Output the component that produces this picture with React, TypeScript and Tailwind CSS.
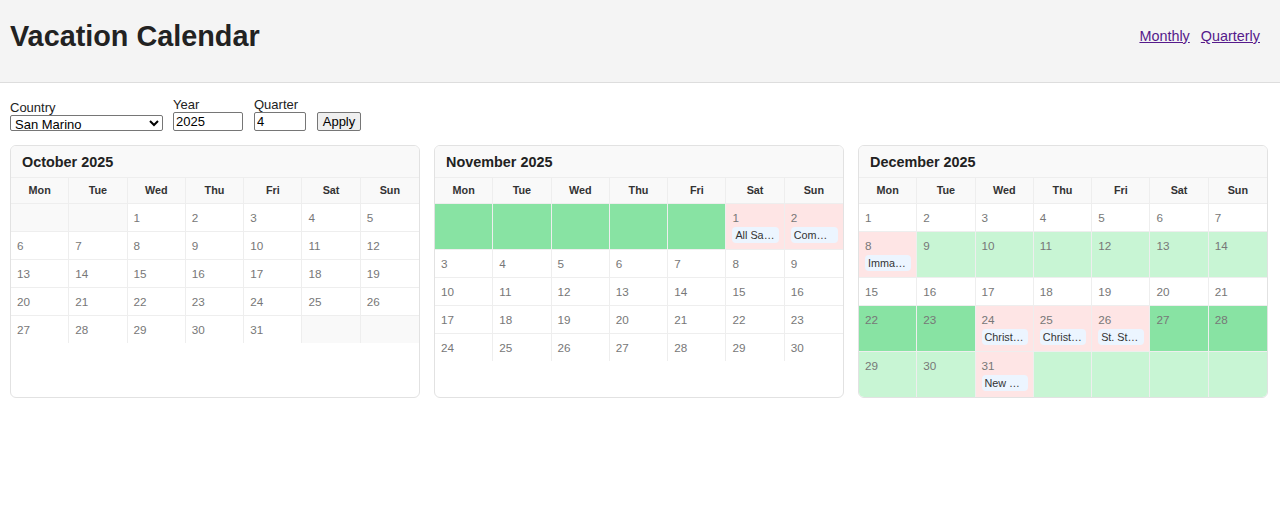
import React from "react";

type Kind = "empty" | "plain" | "holiday" | "bridge" | "vacation";

interface Cell {
    day?: number;
    kind: Kind;
    holiday?: string;
}

interface MonthData {
    title: string;
    weeks: Cell[][];
}

const DAYS = ["Mon", "Tue", "Wed", "Thu", "Fri", "Sat", "Sun"];

const e = (kind: Kind = "empty"): Cell => ({ kind });
const d = (day: number, kind: Kind = "plain", holiday?: string): Cell => ({
    day,
    kind,
    holiday,
});
const run = (from: number, to: number, kind: Kind = "plain"): Cell[] => {
    const out: Cell[] = [];
    for (let i = from; i <= to; i++) out.push(d(i, kind));
    return out;
};

const months: MonthData[] = [
    {
        title: "October 2025",
        weeks: [
            [e(), e(), ...run(1, 5)],
            run(6, 12),
            run(13, 19),
            run(20, 26),
            [...run(27, 31), e(), e()],
        ],
    },
    {
        title: "November 2025",
        weeks: [
            [
                e("bridge"),
                e("bridge"),
                e("bridge"),
                e("bridge"),
                e("bridge"),
                d(1, "holiday", "All Saints' Day"),
                d(2, "holiday", "Commemoration of the Dead"),
            ],
            run(3, 9),
            run(10, 16),
            run(17, 23),
            run(24, 30),
        ],
    },
    {
        title: "December 2025",
        weeks: [
            run(1, 7),
            [d(8, "holiday", "Immaculate Conception"), ...run(9, 14, "vacation")],
            run(15, 21),
            [
                d(22, "bridge"),
                d(23, "bridge"),
                d(24, "holiday", "Christmas Eve"),
                d(25, "holiday", "Christmas Day"),
                d(26, "holiday", "St. Stephen's Day"),
                d(27, "bridge"),
                d(28, "bridge"),
            ],
            [
                d(29, "vacation"),
                d(30, "vacation"),
                d(31, "holiday", "New Year's Eve"),
                e("vacation"),
                e("vacation"),
                e("vacation"),
                e("vacation"),
            ],
        ],
    },
];

const cellBg: Record<Kind, string> = {
    empty: "bg-[#f9f9f9]",
    plain: "bg-white",
    holiday: "bg-[#fee5e5]",
    bridge: "bg-[#88e3a3]",
    vacation: "bg-[#c8f5d4]",
};

const DayCell: React.FC<{ cell: Cell; last: boolean }> = ({ cell, last }) => (
    <div
        className={`min-w-0 border-t border-[#eeeeee] pb-[6px] pl-[6px] pr-[5px] pt-[6px] ${
            last ? "" : "border-r"
        } ${cellBg[cell.kind]}`}>
        {cell.day !== undefined && (
            <div className="text-[11.7px] leading-[15px] text-[#777]">
                {cell.day}
            </div>
        )}
        {cell.holiday && (
            <div className="mt-[2px] truncate rounded-[4px] bg-[#ecf5ff] px-[3px] py-[1px] text-[10.8px] leading-[14px] text-[#333]">
                {cell.holiday}
            </div>
        )}
    </div>
);

const MonthCard: React.FC<{ month: MonthData }> = ({ month }) => (
    <div className="overflow-hidden rounded-[6px] border border-[#e2e2e2] bg-white">
        <div className="border-b border-[#eeeeee] bg-[#f9f9f9] px-[11px] pb-[7px] pt-[9px] text-[14.4px] font-bold leading-[15px] text-[#222]">
            {month.title}
        </div>
        <div className="grid grid-cols-7">
            {DAYS.map((name, i) => (
                <div
                    key={name}
                    className={`bg-[#f9f9f9] py-[6px] text-center text-[10.8px] font-bold leading-[13px] text-[#333] ${
                        i < 6 ? "border-r border-[#eeeeee]" : ""
                    }`}>
                    {name}
                </div>
            ))}
            {month.weeks.map((week, wi) =>
                week.map((cell, ci) => (
                    <DayCell key={`${wi}-${ci}`} cell={cell} last={ci === 6} />
                )),
            )}
        </div>
    </div>
);

export default function App() {
    return (
        <div className="min-h-[522px] bg-white font-['Liberation_Sans',Arial,sans-serif] text-[#222]">
            <header className="flex items-center justify-between border-b border-[#dddddd] bg-[#f4f4f4] pb-[29px] pl-[10px] pr-[20px] pt-[20px]">
                <h1 className="text-[28.8px] font-bold leading-[33px] text-[#222]">
                    Vacation Calendar
                </h1>
                <nav className="flex gap-[11px] text-[14.4px] leading-[17px]">
                    <a href="#" className="text-[#551a8b] underline">
                        Monthly
                    </a>
                    <a href="#" className="text-[#551a8b] underline">
                        Quarterly
                    </a>
                </nav>
            </header>

            <form className="flex items-end pl-[10px] pt-[14px] text-[13px]">
                <label className="flex flex-col leading-[15px]">
                    Country
                    <select
                        defaultValue="SM"
                        className="h-[16px] w-[153px] rounded-[2px] border border-[#767676] bg-white text-[13px] leading-[14px] text-black">
                        <option value="IT">Italy</option>
                        <option value="SM">San Marino</option>
                        <option value="VA">Vatican City</option>
                    </select>
                </label>
                <label className="ml-[10px] flex flex-col leading-[15px]">
                    Year
                    <input
                        type="text"
                        defaultValue="2025"
                        className="h-[19px] w-[70px] rounded-[2px] border border-[#767676] bg-white px-[2px] text-[13px] text-black"
                    />
                </label>
                <label className="ml-[11px] flex flex-col leading-[15px]">
                    Quarter
                    <input
                        type="text"
                        defaultValue="4"
                        className="h-[19px] w-[52px] rounded-[2px] border border-[#767676] bg-white px-[2px] text-[13px] text-black"
                    />
                </label>
                <button
                    type="button"
                    className="ml-[11px] h-[19px] w-[44px] rounded-[2px] border border-[#767676] bg-[#efefef] text-[13px] leading-[15px] text-black">
                    Apply
                </button>
            </form>

            <div className="mt-[14px] grid grid-cols-3 gap-[14px] pl-[10px] pr-[12px]">
                {months.map((m) => (
                    <MonthCard key={m.title} month={m} />
                ))}
            </div>
        </div>
    );
}
